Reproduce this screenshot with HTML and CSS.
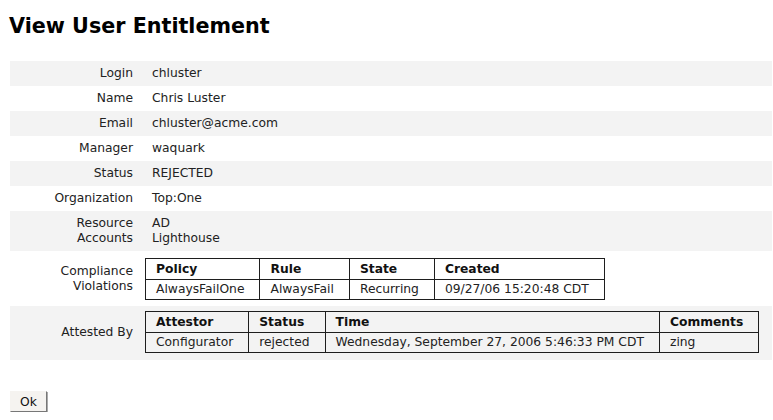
FILE: index.html
```html
<!DOCTYPE html>
<html>
<head>
<meta charset="utf-8">
<title>View User Entitlement</title>
<link rel="stylesheet" href="styles.css">
</head>
<body>
<h1 class="title">View User Entitlement</h1>
<div class="details">
  <div class="row shade"><div class="label">Login</div><div class="val txt">chluster</div></div>
  <div class="row"><div class="label">Name</div><div class="val txt">Chris Luster</div></div>
  <div class="row shade"><div class="label">Email</div><div class="val txt">chluster@acme.com</div></div>
  <div class="row"><div class="label">Manager</div><div class="val txt">waquark</div></div>
  <div class="row shade"><div class="label">Status</div><div class="val txt">REJECTED</div></div>
  <div class="row"><div class="label">Organization</div><div class="val txt">Top:One</div></div>
  <div class="row shade multi"><div class="label">Resource<br>Accounts</div><div class="val txt">AD<br>Lighthouse</div></div>
  <div class="row tablerow"><div class="label">Compliance<br>Violations</div>
    <div class="val">
      <table class="grid">
        <tr><th>Policy</th><th>Rule</th><th>State</th><th>Created</th></tr>
        <tr><td>AlwaysFailOne</td><td>AlwaysFail</td><td>Recurring</td><td>09/27/06 15:20:48 CDT</td></tr>
      </table>
    </div>
  </div>
  <div class="row shade tablerow"><div class="label">Attested By</div>
    <div class="val">
      <table class="grid">
        <tr><th>Attestor</th><th>Status</th><th class="wide">Time</th><th>Comments</th></tr>
        <tr><td>Configurator</td><td>rejected</td><td class="wide">Wednesday, September 27, 2006 5:46:33 PM CDT</td><td>zing</td></tr>
      </table>
    </div>
  </div>
</div>
<div class="actions"><button class="btn">Ok</button></div>
</body>
</html>
```
FILE: styles.css
```css
html, body {
  margin: 0;
  padding: 0;
  background: #ffffff;
}
body {
  padding: 0 1px 0 10px;
  font-family: "DejaVu Sans", sans-serif;
  font-size: 12.3px;
  color: #111;
}
.title {
  margin: 0 0 0 -1px;
  padding-top: 14px;
  height: 61px;
  box-sizing: border-box;
  font-size: 20.7px;
  font-weight: bold;
  line-height: 24px;
  color: #000;
}
.details {
  display: flex;
  flex-direction: column;
}
.row {
  display: flex;
  align-items: center;
  min-height: 25px;
  line-height: 15px;
}
.row.shade {
  background: #f3f3f3;
}
.row.multi {
  padding: 5px 0;
}
.row.tablerow {
  padding: 7px 0 6px;
}
.row.tablerow.shade {
  padding: 5px 0 7px;
}
.label {
  width: 123px;
  padding-right: 7px;
  text-align: right;
  color: #222;
  flex: none;
}
.val {
  padding-left: 5px;
  color: #222;
}
.val.txt {
  padding-left: 12px;
}
.grid {
  border-collapse: collapse;
  border: 1px solid #1e1e1e;
}
.grid th, .grid td {
  border: 1px solid #1e1e1e;
  padding: 2px 15px 2px 10px;
  text-align: left;
  line-height: 15px;
  white-space: nowrap;
}
.grid th {
  font-weight: bold;
  color: #111;
  padding-top: 3px;
  padding-bottom: 2px;
}
.grid td {
  color: #222;
}
.actions {
  padding-top: 31px;
}
.btn {
  font-family: "DejaVu Sans", sans-serif;
  font-size: 12.3px;
  color: #111;
  background: #f5f3f0;
  border: 1px solid;
  border-color: #f5f3f0 #777 #777 #f5f3f0;
  box-shadow: 1px 1px 0 #aaa;
  padding: 2px 9px 2px;
  width: 37px;
  height: 21px;
  margin: 0;
}
```
